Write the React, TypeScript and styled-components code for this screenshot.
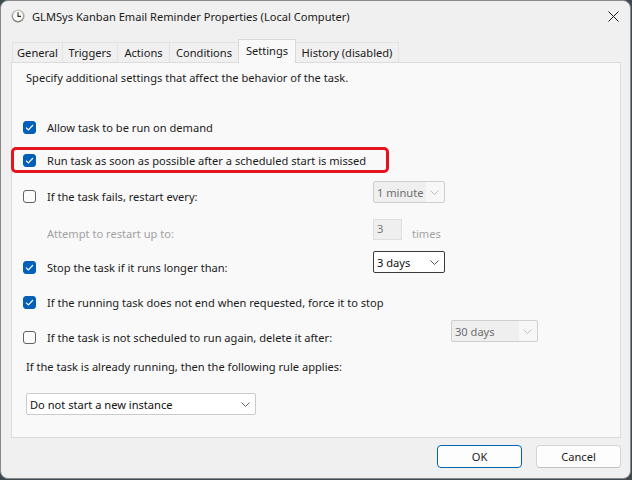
import React from "react";
import styled, { createGlobalStyle, css } from "styled-components";

const Global = createGlobalStyle`
  html, body { margin: 0; padding: 0; }
  body {
    background: #3d4a50;
    font-family: "Noto Sans", "Open Sans", sans-serif;
    font-size: 11.1px;
    color: #1b1b1b;
    -webkit-font-smoothing: antialiased;
  }
  * { box-sizing: border-box; }
`;

const Window = styled.div`
  width: 631px;
  height: 479px;
  background: #f0f0f0;
  border: 1px solid #8a8a8a;
  border-radius: 8px;
  display: flex;
  flex-direction: column;
  overflow: hidden;
`;

const TitleBar = styled.div`
  height: 30px;
  display: flex;
  align-items: center;
  padding-left: 10px;
  gap: 7px;
`;

const Title = styled.div`
  flex: 1;
  color: #1a1a1a;
  white-space: nowrap;
`;

const CloseButton = styled.div`
  width: 40px;
  height: 30px;
  display: flex;
  align-items: center;
  justify-content: center;
  margin-right: -3px;
`;

const TabBar = styled.div`
  display: flex;
  align-items: flex-end;
  margin-top: 8px;
  padding-left: 11px;
  height: 23px;
  position: relative;
  z-index: 1;
`;

const Tab = styled.div<{ $w: number; $active?: boolean }>`
  width: ${(p) => p.$w}px;
  height: 20px;
  display: flex;
  align-items: center;
  justify-content: center;
  white-space: nowrap;
  background: #f0f0f0;
  border: 1px solid #e3e3e3;
  border-bottom: none;
  margin-right: -1px;
  color: #1a1a1a;
  ${(p) =>
    p.$active &&
    css`
      height: 24px;
      margin-bottom: -1px;
      padding-bottom: 3px;
      background: #f9f9f9;
      border-color: #d9d9d9;
      position: relative;
      z-index: 2;
    `}
`;

const Panel = styled.div`
  margin: 0 9px 0 10px;
  height: 376px;
  background: #f9f9f9;
  border: 1px solid #dcdcdc;
  padding: 0 11px;
  display: flex;
  flex-direction: column;
`;

const Intro = styled.div`
  height: 28px;
  margin-bottom: 20px;
  display: flex;
  align-items: center;
  padding-left: 3px;
`;

const Row = styled.div<{ $h: number; $lw?: number }>`
  position: relative;
  height: ${(p) => p.$h}px;
  display: grid;
  grid-template-columns: 24px ${(p) => (p.$lw ? `${p.$lw}px` : "auto")} auto;
  align-items: center;
  white-space: nowrap;
`;

const PlainRow = styled.div<{ $h: number }>`
  height: ${(p) => p.$h}px;
  display: flex;
  align-items: center;
  padding-left: 3px;
`;

const Label = styled.span<{ $muted?: boolean }>`
  color: ${(p) => (p.$muted ? "#a2a2a2" : "#1b1b1b")};
`;

const Box = styled.span<{ $checked?: boolean }>`
  width: 13px;
  height: 13px;
  border-radius: 3px;
  display: flex;
  align-items: center;
  justify-content: center;
  ${(p) =>
    p.$checked
      ? css`
          background: #005fb8;
          border: 1px solid #005fb8;
        `
      : css`
          background: #fbfbfb;
          border: 1px solid #626262;
        `}
`;

const Highlight = styled.div`
  position: absolute;
  left: -12px;
  top: 4px;
  width: 378px;
  height: 26px;
  border: 3px solid #e3141d;
  border-radius: 5px;
  pointer-events: none;
`;

const Select = styled.div<{
  $w: number;
  $top?: number;
  $disabled?: boolean;
  $strong?: boolean;
}>`
  width: ${(p) => p.$w}px;
  height: 22px;
  display: flex;
  align-items: center;
  justify-content: space-between;
  padding: 0 5px 0 3px;
  border-radius: 2px;
  ${(p) =>
    p.$top !== undefined &&
    css`
      align-self: start;
      margin-top: ${p.$top}px;
    `}
  ${(p) =>
    p.$disabled
      ? css`
          background: linear-gradient(
            to right,
            #efefef 0,
            #efefef calc(100% - 18px),
            #f7f7f7 calc(100% - 18px)
          );
          border: 1px solid #cfcfcf;
          color: #6e6e6e;
        `
      : css`
          background: #ffffff;
          border: 1px solid ${p.$strong ? "#3a3a3a" : "#cbcbcb"};
          color: #111;
        `}
`;

const Field = styled.div`
  width: 29px;
  height: 21px;
  align-self: start;
  margin-top: 4px;
  padding: 1px 0 0 3px;
  display: flex;
  align-items: flex-start;
  background: #efefef;
  border: 1px solid #dedede;
  color: #777;
`;

const Controls = styled.div`
  display: flex;
  align-items: center;
  gap: 10px;
  height: 100%;
`;

const Footer = styled.div`
  display: flex;
  justify-content: flex-end;
  gap: 14px;
  margin-top: 7px;
  padding-right: 9px;
`;

const Button = styled.div<{ $primary?: boolean }>`
  width: 85px;
  height: 23px;
  display: flex;
  align-items: center;
  justify-content: center;
  background: #fdfdfd;
  border: 1px solid ${(p) => (p.$primary ? "#0063b1" : "#d4d4d4")};
  border-bottom-color: ${(p) => (p.$primary ? "#0063b1" : "#c2c2c2")};
  border-radius: 4px;
  color: #1a1a1a;
`;

const Chevron = ({ color }: { color: string }) => (
  <svg width="9" height="5" viewBox="0 0 9 5">
    <path d="M0.5 0.5 L4.5 4.5 L8.5 0.5" fill="none" stroke={color} strokeWidth="1" />
  </svg>
);

const ClockIcon = () => (
  <svg width="14" height="14" viewBox="0 0 14 14">
    <defs>
      <linearGradient id="rim" x1="0" y1="0" x2="0" y2="1">
        <stop offset="0" stopColor="#c9c9c9" />
        <stop offset="1" stopColor="#7d7d7d" />
      </linearGradient>
    </defs>
    <circle cx="7" cy="7" r="6.5" fill="url(#rim)" />
    <circle cx="7" cy="7" r="5" fill="#fbfbf6" />
    <path d="M7 3.2 V7.4 H10" fill="none" stroke="#2a2a2a" strokeWidth="1.1" />
  </svg>
);

const CloseIcon = () => (
  <svg width="11" height="11" viewBox="0 0 11 11">
    <path d="M0.5 0.5 L10.5 10.5 M10.5 0.5 L0.5 10.5" stroke="#1a1a1a" strokeWidth="1" />
  </svg>
);

const Check = ({ checked }: { checked?: boolean }) => (
  <Box $checked={checked}>
    {checked && (
      <svg width="9" height="7" viewBox="0 0 9 7">
        <path d="M1 3.6 L3.4 6 L8 1" fill="none" stroke="#ffffff" strokeWidth="1.2" />
      </svg>
    )}
  </Box>
);

const tabs = [
  { name: "General", w: 51 },
  { name: "Triggers", w: 56 },
  { name: "Actions", w: 53 },
  { name: "Conditions", w: 70 },
  { name: "Settings", w: 58, active: true },
  { name: "History (disabled)", w: 104 },
];

export default function App() {
  return (
    <>
      <Global />
      <Window>
        <TitleBar>
          <ClockIcon />
          <Title>GLMSys Kanban Email Reminder Properties (Local Computer)</Title>
          <CloseButton>
            <CloseIcon />
          </CloseButton>
        </TitleBar>

        <TabBar>
          {tabs.map((t) => (
            <Tab key={t.name} $w={t.w} $active={t.active}>
              {t.name}
            </Tab>
          ))}
        </TabBar>

        <Panel>
          <Intro>Specify additional settings that affect the behavior of the task.</Intro>

          <Row $h={32}>
            <Check checked />
            <Label>Allow task to be run on demand</Label>
          </Row>

          <Row $h={34}>
            <Check checked />
            <Label>Run task as soon as possible after a scheduled start is missed</Label>
            <Highlight />
          </Row>

          <Row $h={38} $lw={326}>
            <Check />
            <Label>If the task fails, restart every:</Label>
            <Select $w={72} $top={4} $disabled>
              <span>1 minute</span>
              <Chevron color="#bdbdbd" />
            </Select>
          </Row>

          <Row $h={36} $lw={326}>
            <span />
            <Label $muted>Attempt to restart up to:</Label>
            <Controls>
              <Field>3</Field>
              <Label $muted>times</Label>
            </Controls>
          </Row>

          <Row $h={32} $lw={326}>
            <Check checked />
            <Label>Stop the task if it runs longer than:</Label>
            <Select $w={72} $top={0} $strong>
              <span>3 days</span>
              <Chevron color="#555" />
            </Select>
          </Row>

          <Row $h={38}>
            <Check checked />
            <Label>If the running task does not end when requested, force it to stop</Label>
          </Row>

          <Row $h={32} $lw={404}>
            <Check />
            <Label>If the task is not scheduled to run again, delete it after:</Label>
            <Select $w={87} $top={-1} $disabled>
              <span>30 days</span>
              <Chevron color="#bdbdbd" />
            </Select>
          </Row>

          <PlainRow $h={26}>If the task is already running, then the following rule applies:</PlainRow>

          <PlainRow $h={50}>
            <Select $w={230}>
              <span>Do not start a new instance</span>
              <Chevron color="#666" />
            </Select>
          </PlainRow>
        </Panel>

        <Footer>
          <Button $primary>OK</Button>
          <Button>Cancel</Button>
        </Footer>
      </Window>
    </>
  );
}
